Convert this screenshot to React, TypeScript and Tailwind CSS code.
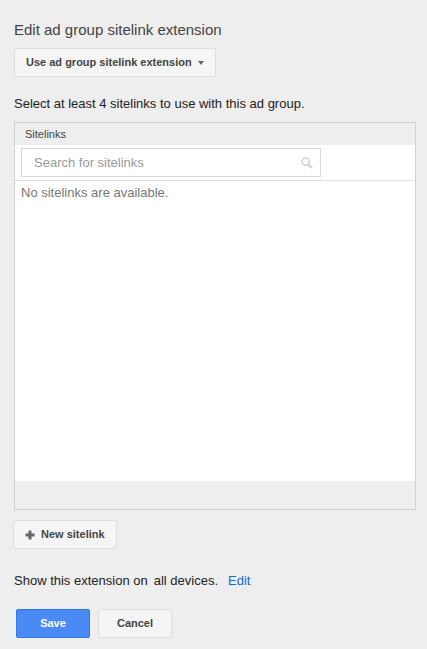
import React from 'react';

const App: React.FC = () => {
  return (
    <div className="w-[427px] h-[649px] overflow-hidden bg-[#eeeeee] font-['Liberation_Sans',Arial,sans-serif] text-[#333333]">
      <div className="pl-[14px] pr-[11px] pt-[21px]">
        <h1 className="text-[15px] leading-[18px] font-normal text-[#444444]">Edit ad group sitelink extension</h1>

        <button className="mt-[9px] h-[29px] w-[202px] flex items-center pl-[11px] rounded-[2px] border border-[#dcdcdc] bg-[#f5f5f5] text-[11px] font-bold text-[#444444]">
          Use ad group sitelink extension
          <span className="ml-[6px] mt-[1px] w-0 h-0 border-x-[3.5px] border-x-transparent border-t-[4px] border-t-[#666666]" />
        </button>

        <p className="mt-[20px] text-[13px] leading-[14px] text-[#222222]">Select at least 4 sitelinks to use with this ad group.</p>

        <div className="mt-[11px] h-[388px] flex flex-col border border-[#d0d0d0]">
          <div className="h-[22px] pl-[10px] flex items-center text-[11px] text-[#444444]">Sitelinks</div>
          <div className="h-[36px] bg-white border-b border-[#dddddd] pl-[6px] pt-[3px]">
            <div className="h-[29px] w-[300px] flex items-center justify-between pl-[12px] pr-[7px] border border-[#d9d9d9] bg-white">
              <span className="text-[13px] text-[#999999]">Search for sitelinks</span>
              <svg width="12" height="12" viewBox="0 0 12 12" fill="none" stroke="#d4d4d4">
                <circle cx="4.8" cy="4.8" r="3.6" strokeWidth="1.7" />
                <path d="M7.6 7.6 11 11" strokeWidth="2.2" />
              </svg>
            </div>
          </div>
          <div className="h-[300px] bg-white pl-[6px] pt-[4px] text-[13px] leading-[16px] text-[#777777]">No sitelinks are available.</div>
          <div className="flex-1" />
        </div>

        <button className="mt-[10px] -ml-[1px] h-[29px] w-[104px] flex items-center pl-[11px] rounded-[2px] border border-[#dcdcdc] bg-[#f5f5f5] text-[11px] font-bold text-[#444444]">
          <svg width="10" height="10" viewBox="0 0 10 10" fill="#666666" className="mr-[6px]">
            <path d="M3.5 0.5h3v3h3v3h-3v3h-3v-3h-3v-3h3z" />
          </svg>
          New sitelink
        </button>

        <div className="mt-[24px] flex text-[13px] leading-[16px] text-[#222222]">
          <span>Show this extension on</span>
          <span className="ml-[6px]">all devices.</span>
          <a href="#" className="ml-[10px] text-[#0f6bd6]">Edit</a>
        </div>

        <div className="mt-[20px] ml-[2px] flex gap-[8px]">
          <button className="h-[29px] w-[74px] rounded-[2px] border border-[#3079ed] bg-[#4a8af4] text-[11px] font-bold text-white">Save</button>
          <button className="h-[29px] w-[74px] rounded-[2px] border border-[#dcdcdc] bg-[#f5f5f5] text-[11px] font-bold text-[#444444]">Cancel</button>
        </div>
      </div>
    </div>
  );
};

export default App;
